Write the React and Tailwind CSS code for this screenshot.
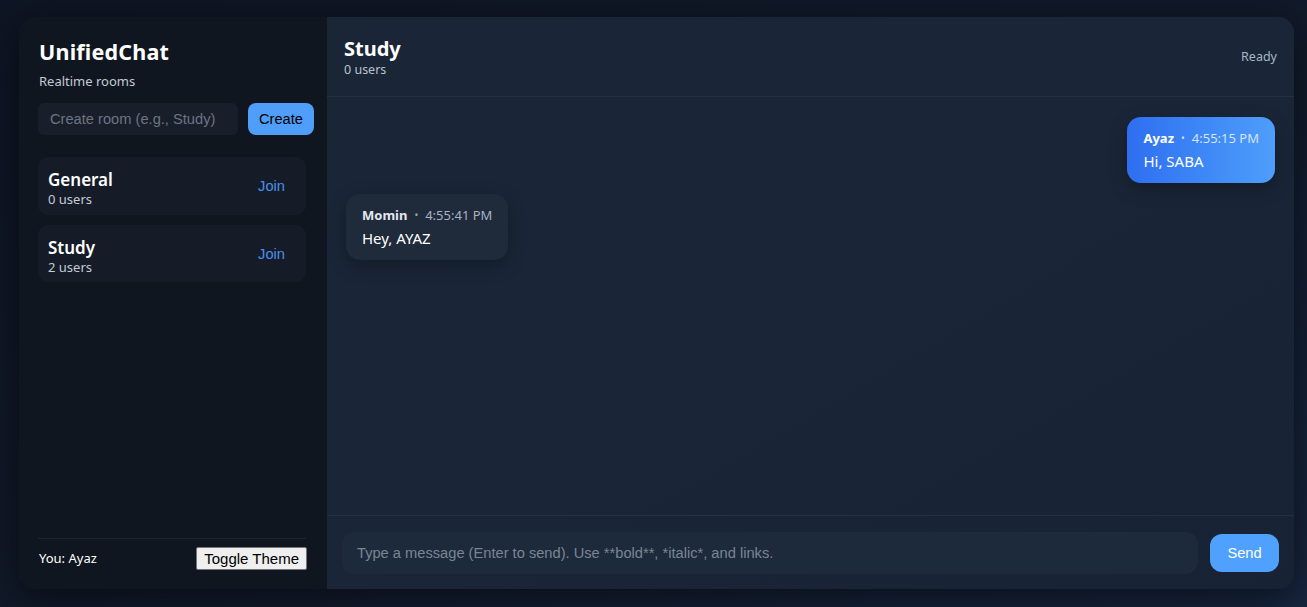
export default function App() {
  const ui = { fontFamily: '"Noto Sans", "Open Sans", sans-serif' };
  const arial = { fontFamily: '"Liberation Sans", Arial, sans-serif' };
  return (
    <div className="w-[1307px] h-[607px] bg-gradient-to-br from-[#0e1524] via-[#111a2a] to-[#172640] p-[17px_13px_18px_19px]" style={ui}>
      <div className="flex h-full w-full rounded-[16px] overflow-hidden shadow-[0_10px_40px_rgba(0,0,0,0.55)]">
        {/* Sidebar */}
        <aside className="w-[308px] shrink-0 bg-[#10161f] flex flex-col pl-[20px] pr-[21px] pt-[20px] pb-[19px]">
          <h1 className="text-[21.5px] font-bold text-white leading-[30px] tracking-[0.2px]">UnifiedChat</h1>
          <div className="text-[13px] text-[#c4cbd6] mt-[5px] leading-[18px]">Realtime rooms</div>
          <div className="flex gap-[10px] mt-[13px] -ml-px w-[276px]">
            <input
              className="w-[200px] h-[32px] rounded-[6px] bg-[#181f2b] px-[12px] text-[14.67px] text-white placeholder:text-[#6d7480] outline-none"
              style={arial}
              placeholder="Create room (e.g., Study)"
            />
            <button className="w-[66px] h-[32px] rounded-[8px] bg-[#4f9ef9] text-black text-[14.67px]" style={arial}>Create</button>
          </div>
          <div className="flex flex-col gap-[10px] mt-[22px] -ml-px">
            {[
              ["General", "0 users"],
              ["Study", "2 users"],
            ].map(([n, u], i) => (
              <div key={n} className={`flex items-center justify-between rounded-[10px] bg-[#151c28] pl-[10px] pr-[21px] ${i === 0 ? "h-[58px]" : "h-[57px]"}`}>
                <div className="flex flex-col mt-[4px]">
                  <span className="text-[17px] font-semibold text-white leading-[22px]">{n}</span>
                  <span className="text-[13px] text-[#c4cbd6] leading-[16px]">{u}</span>
                </div>
                <span className="text-[14.67px] text-[#4b8fe8]" style={arial}>Join</span>
              </div>
            ))}
          </div>
          <div className="flex-1" />
          <div className="border-t border-[#1c2331] pt-[8px] flex items-center justify-between -ml-px">
            <span className="text-[13px] text-white pl-px">You: Ayaz</span>
            <button className="bg-[#efefef] border border-[#767676] rounded-[2px] px-[7px] h-[23px] text-[15px] text-black leading-none mr-[-1px]" style={arial}>Toggle Theme</button>
          </div>
        </aside>
        {/* Main */}
        <main className="flex-1 flex flex-col bg-gradient-to-br from-[#1a2536] via-[#1a2638] to-[#172234]">
          <header className="h-[80px] border-b border-[#243044] flex items-center justify-between px-[17px] pt-[1px]">
            <div className="flex flex-col">
              <span className="text-[20px] font-bold text-white leading-[26px]">Study</span>
              <span className="text-[12.5px] text-[#b9c2ce] leading-[16px]">0 users</span>
            </div>
            <span className="text-[12.5px] text-[#a6b6c8]">Ready</span>
          </header>
          <div className="flex-1 flex flex-col gap-[11px] px-[19px] pt-[20px]">
            <div className="self-end rounded-[14px] bg-gradient-to-r from-[#2f6ef0] to-[#4e9efb] px-[16px] pt-[12px] pb-[12px] shadow-[0_6px_18px_rgba(0,0,0,0.3)]">
              <div className="flex items-center text-[13px] leading-[18px]">
                <span className="font-bold text-white">Ayaz</span>
                <span className="mx-[7px] text-[#c9dafc] text-[10px]">•</span>
                <span className="text-[#d6e4fd]">4:55:15 PM</span>
              </div>
              <div className="text-[15px] text-white leading-[20px] mt-[4px]">Hi, SABA</div>
            </div>
            <div className="self-start rounded-[14px] bg-[#1f2a3b] px-[16px] pt-[12px] pb-[12px] shadow-[0_6px_18px_rgba(0,0,0,0.3)]">
              <div className="flex items-center text-[13px] leading-[18px]">
                <span className="font-bold text-[#e4e8ee]">Momin</span>
                <span className="mx-[7px] text-[#98a3b3] text-[10px]">•</span>
                <span className="text-[#a9b4c3]">4:55:41 PM</span>
              </div>
              <div className="text-[15px] text-white leading-[20px] mt-[4px]">Hey, AYAZ</div>
            </div>
          </div>
          <footer className="h-[74px] border-t border-[#223047] flex items-center gap-[12px] pl-[15px] pr-[15px] pt-[1px]">
            <input
              className="flex-1 h-[42px] rounded-[12px] bg-[#1d2a3c] px-[15px] text-[14.67px] text-white placeholder:text-[#7a8594] outline-none"
              style={arial}
              placeholder="Type a message (Enter to send). Use **bold**, *italic*, and links."
            />
            <button className="w-[69px] h-[38px] rounded-[12px] bg-[#4fa1fd] text-white text-[14.67px]" style={arial}>Send</button>
          </footer>
        </main>
      </div>
    </div>
  );
}
